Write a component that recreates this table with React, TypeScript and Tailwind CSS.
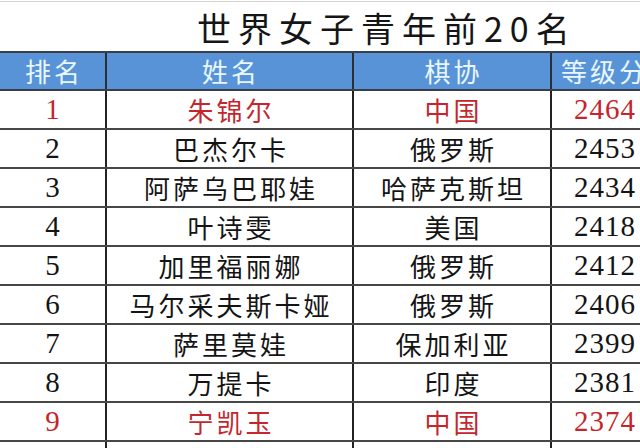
const rows = [
  { rank: "1", name: "朱锦尔", fed: "中国", rating: "2464", red: true },
  { rank: "2", name: "巴杰尔卡", fed: "俄罗斯", rating: "2453" },
  { rank: "3", name: "阿萨乌巴耶娃", fed: "哈萨克斯坦", rating: "2434" },
  { rank: "4", name: "叶诗雯", fed: "美国", rating: "2418" },
  { rank: "5", name: "加里福丽娜", fed: "俄罗斯", rating: "2412" },
  { rank: "6", name: "马尔采夫斯卡娅", fed: "俄罗斯", rating: "2406" },
  { rank: "7", name: "萨里莫娃", fed: "保加利亚", rating: "2399" },
  { rank: "8", name: "万提卡", fed: "印度", rating: "2381" },
  { rank: "9", name: "宁凯玉", fed: "中国", rating: "2374", red: true },
  { rank: "10", name: "", fed: "", rating: "" },
];

const cjk = "font-['Noto_Sans_CJK_SC',sans-serif]";
const serif = "font-['Liberation_Serif','Noto_Sans_CJK_SC',serif]";
const grid = "grid grid-cols-[107px_247px_198px_130px] grid-rows-[1fr] w-[682px] whitespace-nowrap";

export default function App() {
  return (
    <div className="w-[640px] h-[448px] overflow-hidden bg-white">
      <div className="mt-[1px] border-t border-[#d4d4d4] w-full" />
      {/* title */}
      <div className="h-[49px] flex items-center pl-[197px] pt-[3px] whitespace-nowrap">
        <h1 className={`${cjk} text-[34px] leading-none tracking-[7px] text-[#151515] font-normal`}>
          世界女子青年前20名
        </h1>
      </div>

      {/* header */}
      <div className={`${grid} h-[40px] bg-[#5893d8] border-t-2 border-b-2 border-[#3a3f47] overflow-hidden`}>
        {["排名", "姓名", "棋协", "等级分"].map((h, i) => (
          <div
            key={h}
            className={`${cjk} flex items-center leading-none text-[26px] tracking-[3px] text-[#e8f7ff] ${
              i < 3 ? "justify-center pl-[3px] border-r-2 border-[#2a2f36]" : "justify-start pl-[9px]"
            }`}
          >
            {h}
          </div>
        ))}
      </div>

      {/* rows */}
      {rows.map((r) => {
        const color = r.red ? "text-[#c4262c]" : "text-[#141414]";
        return (
          <div key={r.rank} className={`${grid} h-[39px] border-b-2 border-[#474747] overflow-hidden`}>
            <div className={`${serif} ${color} flex items-center justify-center leading-none text-[29px] border-r-2 border-[#222]`}>
              {r.name ? r.rank : ""}
            </div>
            <div className={`${cjk} ${color} flex items-center justify-center leading-none pl-[3px] text-[26px] tracking-[3px] border-r-2 border-[#222]`}>
              {r.name}
            </div>
            <div className={`${cjk} ${color} flex items-center justify-center leading-none pl-[3px] text-[26px] tracking-[3px] border-r-2 border-[#222]`}>
              {r.fed}
            </div>
            <div className={`${serif} ${color} flex items-center leading-none pl-[22px] text-[29px] tracking-[1px]`}>
              {r.rating}
            </div>
          </div>
        );
      })}
    </div>
  );
}
